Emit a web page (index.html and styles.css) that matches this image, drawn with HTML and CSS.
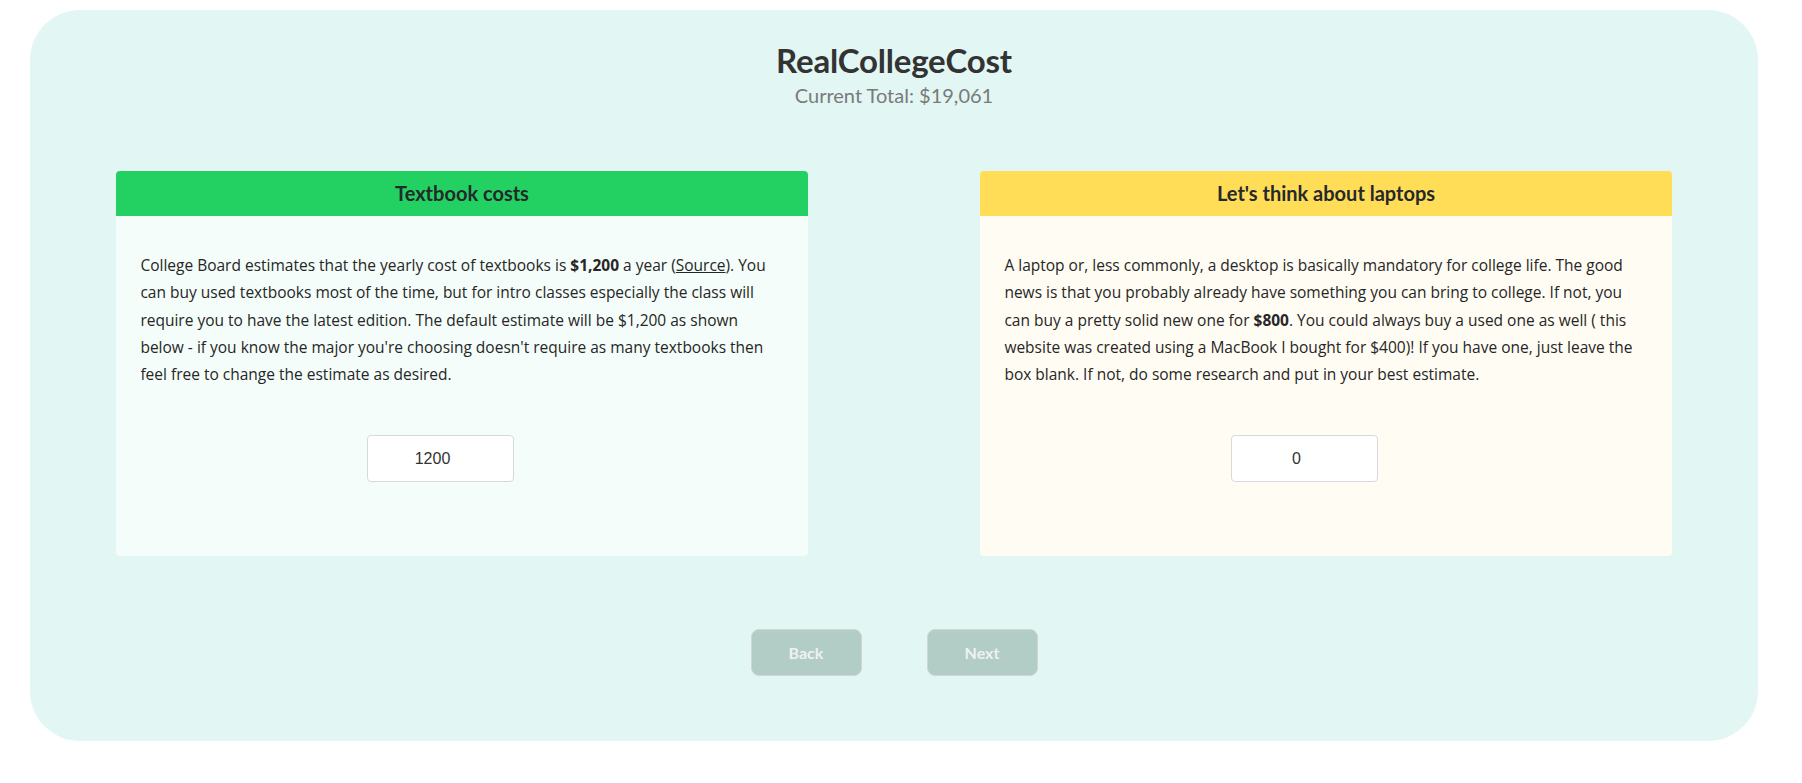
FILE: index.html
```html
<!DOCTYPE html>
<html lang="en">
<head>
<meta charset="utf-8">
<title>RealCollegeCost</title>
<link rel="stylesheet" href="styles.css">
</head>
<body>
<main class="shell">
  <header class="top">
    <h1 class="title">RealCollegeCost</h1>
    <p class="total">Current Total: $19,061</p>
  </header>
  <section class="cards">
    <article class="card card-green">
      <h2 class="card-head">Textbook costs</h2>
      <div class="card-body">
        <p class="card-text">College Board estimates that the yearly cost of textbooks is <b>$1,200</b> a year (<a class="link" href="#">Source</a>). You can buy used textbooks most of the time, but for intro classes especially the class will require you to have the latest edition. The default estimate will be $1,200 as shown below - if you know the major you're choosing doesn't require as many textbooks then feel free to change the estimate as desired.</p>
        <div class="field"><input class="amount" type="text" value="1200"></div>
      </div>
    </article>
    <article class="card card-yellow">
      <h2 class="card-head">Let's think about laptops</h2>
      <div class="card-body">
        <p class="card-text">A laptop or, less commonly, a desktop is basically mandatory for college life. The good news is that you probably already have something you can bring to college. If not, you can buy a pretty solid new one for <b>$800</b>. You could always buy a used one as well ( this website was created using a MacBook I bought for $400)! If you have one, just leave the box blank. If not, do some research and put in your best estimate.</p>
        <div class="field"><input class="amount" type="text" value="0"></div>
      </div>
    </article>
  </section>
  <nav class="actions">
    <button class="btn" type="button">Back</button>
    <button class="btn" type="button">Next</button>
  </nav>
</main>
</body>
</html>
```
FILE: styles.css
```css
html, body {
  margin: 0;
  padding: 0;
  background: #ffffff;
}
body {
  font-family: Lato, "Open Sans", sans-serif;
  color: #2b2b2b;
}
.shell {
  box-sizing: border-box;
  width: 1728px;
  height: 731px;
  margin: 10px 0 0 30px;
  background: #e2f6f3;
  border-radius: 50px;
  padding-top: 30px;
}
.top {
  text-align: center;
}
.title {
  margin: 0;
  font-size: 33px;
  line-height: 40px;
  font-weight: 700;
  color: #333;
  letter-spacing: -0.2px;
}
.total {
  margin: 4px 0 0;
  font-size: 20px;
  line-height: 22px;
  color: #7a7a7a;
}
.cards {
  display: flex;
  justify-content: space-around;
  margin-top: 65px;
}
.card {
  width: 40%;
  height: 385px;
  border-radius: 4px;
  overflow: hidden;
  display: flex;
  flex-direction: column;
}
.card-green { background: #f4fdf9; }
.card-yellow { background: #fffcf4; }
.card-head {
  margin: 0;
  height: 45px;
  line-height: 45px;
  text-align: center;
  font-size: 20px;
  font-weight: 700;
  color: #25292b;
}
.card-green .card-head { background: #23d162; }
.card-yellow .card-head { background: #ffdd57; }
.card-body {
  padding: 36px 24px 0 24px;
}
.card-text {
  margin: 0;
  font-family: "Open Sans", Lato, sans-serif;
  font-size: 15.5px;
  line-height: 27.3px;
  color: #262626;
}
.card-text b { font-weight: 700; }
.link {
  color: inherit;
  text-decoration: underline;
}
.field {
  margin-top: 47px;
  text-align: center;
}
.amount {
  box-sizing: border-box;
  width: 147px;
  height: 47px;
  margin-right: 44px;
  padding: 0 15px 0 0;
  border: 1px solid #d9d9d9;
  border-radius: 4px;
  background: #fff;
  font-family: "Liberation Sans", Arial, sans-serif;
  font-size: 16px;
  color: #333;
  text-align: center;
}
.actions {
  display: flex;
  justify-content: center;
  gap: 65px;
  margin-top: 73px;
}
.btn {
  box-sizing: border-box;
  width: 111px;
  height: 47px;
  background: #b2cdc6;
  border: 1px solid #cfd6d3;
  border-radius: 8px;
  color: #eef2f1;
  font-family: Lato, "Open Sans", sans-serif;
  font-size: 16px;
  font-weight: 700;
}
```
